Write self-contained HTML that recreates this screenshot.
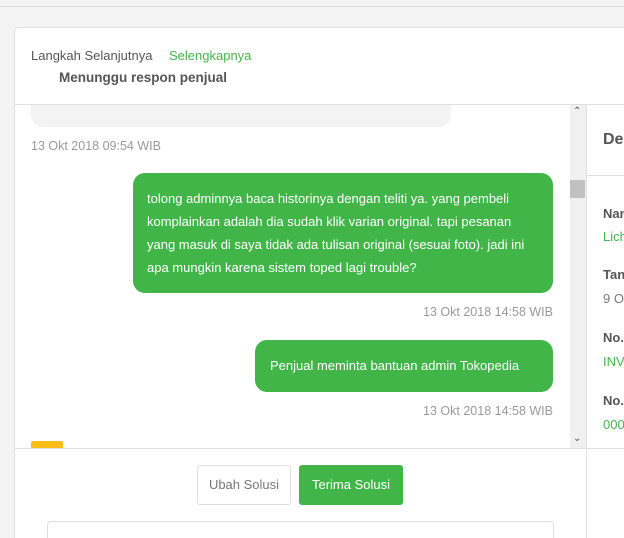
<!DOCTYPE html>
<html><head><style>
*{box-sizing:border-box;margin:0;padding:0}
html,body{width:624px;height:538px;overflow:hidden}
body{background:#f4f4f4;font-family:"Liberation Sans",sans-serif;position:relative;color:#555}
.a{position:absolute}
.topline{left:0;top:6px;width:624px;height:1px;background:#ddd}
.card{left:14px;top:27px;width:620px;height:511px;background:#fff;border:1px solid #e0e0e0;border-bottom:none;border-radius:4px 4px 0 0}
.t{font-size:13px;white-space:nowrap}
.bub{background:#42b549;color:#fff;font-size:13px;line-height:23px;border-radius:12px;padding:0 14px}
.ts{font-size:12.5px;color:#999;white-space:nowrap;text-align:right;width:300px}
</style></head><body>
<div class="a topline"></div>
<div class="a card"></div>
<div class="a t" style="left:31px;top:48px;color:#555">Langkah Selanjutnya</div>
<div class="a t" style="left:169px;top:48px;color:#42b549">Selengkapnya</div>
<div class="a t" style="left:59px;top:70px;font-weight:bold;color:#555;font-size:13.5px">Menunggu respon penjual</div>
<div class="a" style="left:15px;top:104px;width:620px;height:1px;background:#e0e0e0"></div>
<div class="a" style="left:31px;top:105px;width:420px;height:22px;background:#f3f3f3;border-radius:0 0 12px 12px"></div>
<div class="a ts" style="left:31px;top:139px;text-align:left">13 Okt 2018 09:54 WIB</div>
<div class="a bub" style="left:133px;top:173px;width:420px;height:120px;padding-top:14px">tolong adminnya baca historinya dengan teliti ya. yang pembeli komplainkan adalah dia sudah klik varian original. tapi pesanan yang masuk di saya tidak ada tulisan original (sesuai foto). jadi ini apa mungkin karena sistem toped lagi trouble?</div>
<div class="a ts" style="left:253px;top:305px">13 Okt 2018 14:58 WIB</div>
<div class="a bub" style="left:255px;top:340px;width:298px;height:52px;padding-top:14px;padding-left:15px">Penjual meminta bantuan admin Tokopedia</div>
<div class="a ts" style="left:253px;top:404px">13 Okt 2018 14:58 WIB</div>
<div class="a" style="left:31px;top:441px;width:32px;height:7px;background:#fbbd16;border-radius:2px 2px 0 0"></div>
<div class="a" style="left:570px;top:105px;width:16px;height:343px;background:#f0f0f0"></div>
<div class="a" style="left:570px;top:180px;width:15px;height:18px;background:#c1c1c1"></div>
<div class="a" style="left:573px;top:106px;font-size:10px;color:#555">&#8963;</div>
<div class="a" style="left:573px;top:433px;font-size:10px;color:#555">&#8964;</div>
<div class="a" style="left:586px;top:105px;width:1px;height:433px;background:#e0e0e0"></div>
<div class="a" style="left:15px;top:448px;width:620px;height:1px;background:#e0e0e0"></div>
<div class="a" style="left:587px;top:175px;width:40px;height:1px;background:#e0e0e0"></div>
<div class="a t" style="left:603px;top:131px;font-size:16px;font-weight:bold;color:#555">De</div>
<div class="a t" style="left:603px;top:206px;font-weight:bold">Nam</div>
<div class="a t" style="left:603px;top:229px;color:#42b549">Lich</div>
<div class="a t" style="left:603px;top:267px;font-weight:bold">Tang</div>
<div class="a t" style="left:603px;top:291px;color:#777">9 O</div>
<div class="a t" style="left:603px;top:330px;font-weight:bold">No.</div>
<div class="a t" style="left:603px;top:354px;color:#42b549">INV</div>
<div class="a t" style="left:603px;top:393px;font-weight:bold">No.</div>
<div class="a t" style="left:603px;top:417px;color:#42b549">000</div>
<div class="a t" style="left:197px;top:465px;width:94px;height:40px;border:1px solid #ddd;border-radius:3px;line-height:38px;text-align:center;color:#777">Ubah Solusi</div>
<div class="a t" style="left:299px;top:465px;width:104px;height:40px;background:#42b549;border-radius:3px;line-height:40px;text-align:center;color:#fff">Terima Solusi</div>
<div class="a" style="left:47px;top:521px;width:507px;height:30px;border:1px solid #ddd;border-radius:4px"></div>
</body></html>
